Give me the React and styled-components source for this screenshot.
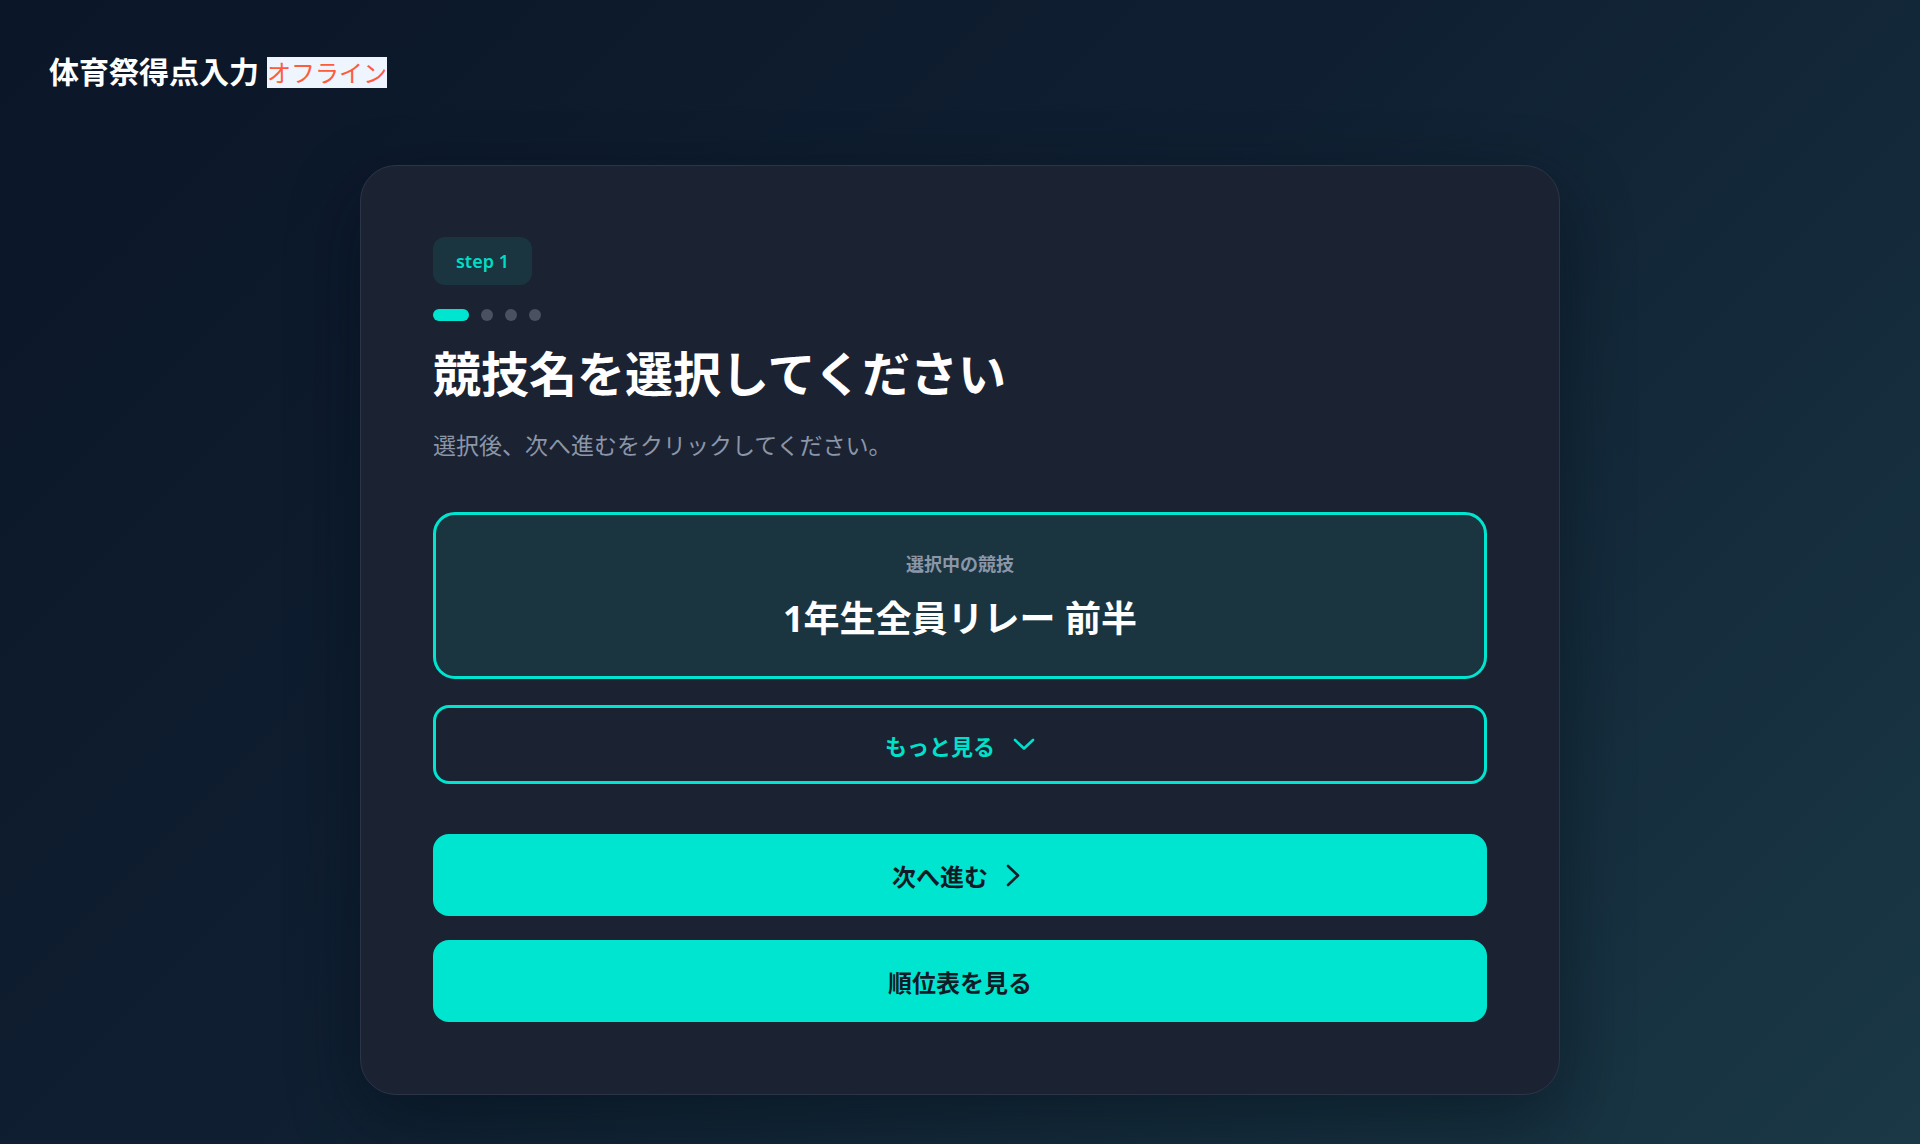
import React from 'react';
import styled, { createGlobalStyle } from 'styled-components';

const GlobalStyle = createGlobalStyle`
  * {
    box-sizing: border-box;
  }
  html,
  body {
    margin: 0;
    padding: 0;
  }
  body {
    min-height: 100vh;
    font-family: 'Noto Sans', 'Noto Sans CJK JP', sans-serif;
    background: linear-gradient(135deg, #0b1628 0%, #0f1f31 45%, #1a3846 100%);
    background-attachment: fixed;
    color: #ffffff;
  }
`;

const steps = [0, 1, 2, 3];

function ChevronDown() {
  return (
    <svg width="22" height="13" viewBox="0 0 22 13" fill="none">
      <polyline
        points="2,2 11,10.5 20,2"
        stroke="currentColor"
        strokeWidth="2.6"
        strokeLinecap="round"
        strokeLinejoin="round"
      />
    </svg>
  );
}

function ChevronRight() {
  return (
    <svg width="14" height="23" viewBox="0 0 14 23" fill="none">
      <polyline
        points="2,2 12,11.5 2,21"
        stroke="currentColor"
        strokeWidth="2.6"
        strokeLinecap="round"
        strokeLinejoin="round"
      />
    </svg>
  );
}

function App() {
  const current = 0;

  return (
    <>
      <GlobalStyle />
      <Page>
        <Header>
          <AppTitle>体育祭得点入力</AppTitle>
          <OfflineBadge>オフライン</OfflineBadge>
        </Header>

        <Card>
          <StepBadge>step 1</StepBadge>
          <Dots>
            {steps.map((s) => (
              <Dot key={s} $active={s === current} />
            ))}
          </Dots>
          <Heading>競技名を選択してください</Heading>
          <Lead>選択後、次へ進むをクリックしてください。</Lead>

          <SelectedBox>
            <SelectedLabel>選択中の競技</SelectedLabel>
            <SelectedValue>1年生全員リレー 前半</SelectedValue>
          </SelectedBox>

          <MoreButton type="button">
            もっと見る
            <ChevronDown />
          </MoreButton>

          <Actions>
            <PrimaryButton type="button" $shift>
              次へ進む
              <ChevronRight />
            </PrimaryButton>
            <PrimaryButton type="button">順位表を見る</PrimaryButton>
          </Actions>
        </Card>
      </Page>
    </>
  );
}

export default App;

const Page = styled.div`
  min-height: 100vh;
  padding-bottom: 48px;
`;

const Header = styled.header`
  display: flex;
  align-items: center;
  gap: 8px;
  padding: 50px 48px 0 49px;
`;

const AppTitle = styled.h1`
  margin: 0;
  font-size: 30px;
  line-height: 44px;
  font-weight: 700;
  color: #ffffff;
`;

const OfflineBadge = styled.span`
  display: inline-block;
  font-size: 24px;
  line-height: 31px;
  font-weight: 400;
  color: #ff5b3d;
  background: #eef5ff;
`;

const Card = styled.main`
  width: 1200px;
  margin: 71px auto 0;
  padding: 71px 72px 72px;
  background: #1b2232;
  border: 1px solid #2b3547;
  border-radius: 36px;
  box-shadow: 0 24px 70px rgba(3, 10, 20, 0.45);
`;

const StepBadge = styled.div`
  display: inline-flex;
  align-items: center;
  height: 48px;
  padding: 0 23px;
  border-radius: 12px;
  background: #1a3540;
  color: #00dcc6;
  font-size: 18px;
  font-weight: 600;
`;

const Dots = styled.div`
  display: flex;
  gap: 12px;
  margin-top: 24px;
`;

const Dot = styled.span`
  width: ${(p) => (p.$active ? '36px' : '12px')};
  height: 12px;
  border-radius: 6px;
  background: ${(p) => (p.$active ? '#00e5cf' : '#4a5161')};
`;

const Heading = styled.h2`
  margin: 22px 0 0;
  font-size: 48px;
  line-height: 62px;
  font-weight: 700;
  color: #ffffff;
`;

const Lead = styled.p`
  margin: 24px 0 0;
  font-size: 23px;
  line-height: 33px;
  color: #8b96a8;
`;

const SelectedBox = styled.section`
  margin-top: 50px;
  padding: 36px 24px 30px;
  border: 3px solid #00e5cf;
  border-radius: 22px;
  background: #1a3540;
  text-align: center;
`;

const SelectedLabel = styled.div`
  font-size: 18px;
  line-height: 27px;
  font-weight: 700;
  color: #8b96a8;
`;

const SelectedValue = styled.div`
  margin-top: 14px;
  font-size: 36px;
  line-height: 54px;
  font-weight: 700;
  color: #ffffff;
`;

const MoreButton = styled.button`
  display: flex;
  align-items: center;
  justify-content: center;
  gap: 18px;
  width: 100%;
  height: 79px;
  margin-top: 26px;
  border: 3px solid #00e5cf;
  border-radius: 16px;
  background: transparent;
  color: #00e0ca;
  font-family: inherit;
  font-size: 22px;
  font-weight: 700;
  cursor: pointer;
`;

const Actions = styled.div`
  display: flex;
  flex-direction: column;
  gap: 24px;
  margin-top: 50px;
`;

const PrimaryButton = styled.button`
  display: flex;
  align-items: center;
  justify-content: center;
  gap: 18px;
  width: 100%;
  height: 82px;
  padding: ${(p) => (p.$shift ? '0 8px 0 0' : '0')};
  border: none;
  border-radius: 16px;
  background: #00e5cf;
  color: #111b27;
  font-family: inherit;
  font-size: 24px;
  font-weight: 700;
  cursor: pointer;
`;
